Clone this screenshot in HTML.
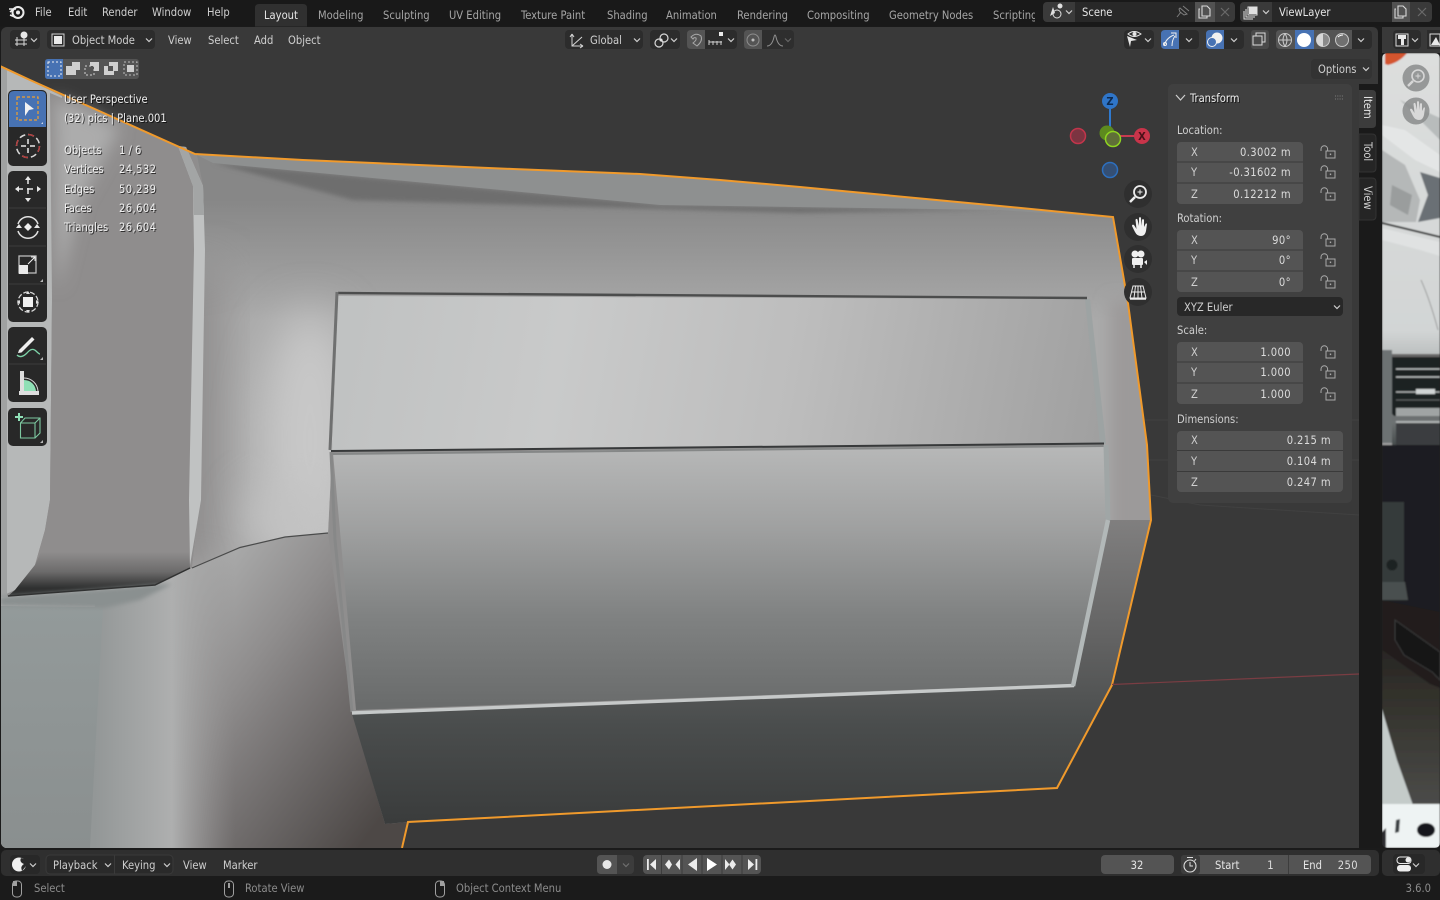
<!DOCTYPE html>
<html><head><meta charset="utf-8"><title>Blender</title>
<style>
html,body{margin:0;padding:0;background:#1b1b1b;width:1440px;height:900px;overflow:hidden}
svg{display:block;position:absolute;left:0;top:0}
text{font-family:"DejaVu Sans Condensed","DejaVu Sans","Liberation Sans",sans-serif;font-stretch:condensed;font-size:11.1px;fill:#cfcfcf}
.d{fill:#a6a6a6}.w{fill:#e6e6e6}.s{fill:#8c8c8c}
.v{fill:#f0f0f0;filter:drop-shadow(1px 1px 0 rgba(0,0,0,.65))}
.n{letter-spacing:.4px}
.r{text-anchor:end;fill:#dcdcdc;letter-spacing:.4px}
.ic{fill:none;stroke:#d8d8d8;stroke-width:1.2}
</style></head><body>
<svg width="1440" height="900" viewBox="0 0 1440 900" xmlns="http://www.w3.org/2000/svg">
<defs>
<clipPath id="vp"><rect x="1" y="27" width="1378" height="821" rx="6"/></clipPath>
<clipPath id="frameclip"><polygon points="197,155 640,174 720,180 800,187 1000,206 1113,218 1128,303 1147,445 1151,520 1107,520 1104,444 1087,299 338,296 332,451 328,533 285,537 240,548 192,568 200,500 205,250 203,186"/></clipPath>
<clipPath id="imgclip"><rect x="1382" y="53" width="58" height="795" rx="5"/></clipPath>
<linearGradient id="gFrame" x1="0" y1="200" x2="0" y2="320" gradientUnits="userSpaceOnUse"><stop offset="0" stop-color="#878787"/><stop offset="1" stop-color="#aaaaaa"/></linearGradient>
<linearGradient id="gUp" x1="330" y1="300" x2="1100" y2="440" gradientUnits="userSpaceOnUse"><stop offset="0" stop-color="#bfc1c1"/><stop offset=".3" stop-color="#c9caca"/><stop offset=".6" stop-color="#bdbdbd"/><stop offset="1" stop-color="#a0a0a0"/></linearGradient>
<linearGradient id="gLow" x1="0" y1="450" x2="0" y2="705" gradientUnits="userSpaceOnUse"><stop offset="0" stop-color="#b6b7b7"/><stop offset=".3" stop-color="#a0a1a1"/><stop offset=".65" stop-color="#808282"/><stop offset="1" stop-color="#6a6c6c"/></linearGradient>
<linearGradient id="gApron" x1="0" y1="520" x2="0" y2="822" gradientUnits="userSpaceOnUse"><stop offset="0" stop-color="#807f7f"/><stop offset=".4" stop-color="#626262"/><stop offset=".68" stop-color="#4a4d4d"/><stop offset="1" stop-color="#3a3c3c"/></linearGradient>
<linearGradient id="gBL" x1="170" y1="600" x2="410" y2="780" gradientUnits="userSpaceOnUse"><stop offset="0" stop-color="#afb0b0"/><stop offset=".35" stop-color="#8f8d8d"/><stop offset=".5" stop-color="#7f7c7c"/><stop offset=".83" stop-color="#5e5a59"/><stop offset="1" stop-color="#4d4846"/></linearGradient>
<linearGradient id="gBLh" x1="95" y1="0" x2="235" y2="0" gradientUnits="userSpaceOnUse"><stop offset="0" stop-color="#939797"/><stop offset=".55" stop-color="#aeafaf"/><stop offset="1" stop-color="#8f8d8d" stop-opacity="0"/></linearGradient>
<linearGradient id="gBLp" x1="0" y1="606" x2="0" y2="848" gradientUnits="userSpaceOnUse"><stop offset="0" stop-color="#939a9a"/><stop offset="1" stop-color="#8a8f8f"/></linearGradient>
<linearGradient id="gLB" x1="0" y1="552" x2="0" y2="588" gradientUnits="userSpaceOnUse"><stop offset="0" stop-color="#8f8d8d"/><stop offset=".55" stop-color="#6c6b6b"/><stop offset="1" stop-color="#2f3030"/></linearGradient>
<linearGradient id="gImg" x1="0" y1="53" x2="0" y2="450" gradientUnits="userSpaceOnUse"><stop offset="0" stop-color="#dcdedd"/><stop offset=".7" stop-color="#d2d5d5"/><stop offset=".88" stop-color="#8f9494"/><stop offset="1" stop-color="#3e4344"/></linearGradient>
<linearGradient id="gGround" x1="0" y1="640" x2="0" y2="805" gradientUnits="userSpaceOnUse"><stop offset="0" stop-color="#262422"/><stop offset=".45" stop-color="#36352f"/><stop offset="1" stop-color="#4b4b49"/></linearGradient>
<filter id="b2"><feGaussianBlur stdDeviation="2"/></filter>
<filter id="b1"><feGaussianBlur stdDeviation=".7"/></filter>
<filter id="b8" x="-50%" y="-50%" width="200%" height="200%"><feGaussianBlur stdDeviation="8"/></filter>
<filter id="b20" x="-50%" y="-50%" width="200%" height="200%"><feGaussianBlur stdDeviation="22"/></filter>
<g id="ch"><path d="M-3,-1.5 L0,1.5 L3,-1.5" fill="none" stroke="#cfcfcf" stroke-width="1.2"/></g>
<g id="lk"><rect x="-2" y="-1" width="9" height="7" fill="none" stroke="#a8a8a8" stroke-width="1"/><rect x="1.8" y="1.5" width="1.4" height="1.6" fill="#a8a8a8"/><path d="M-7,-1 V-3 a3.3,3.3 0 0 1 6.6,0 V-1" fill="none" stroke="#a8a8a8" stroke-width="1"/></g>
<g id="mouse"><rect x="-4.5" y="-8" width="9" height="16" rx="3.6" fill="none" stroke="#a0a0a0" stroke-width="1"/></g>
<g id="copy"><path d="M-5,-3 h-1 v9 h8 v-2 M-3,-6 h5 l3,3 v7 h-8 z" fill="none" stroke="#dadada" stroke-width="1.1"/></g>
<g id="xx"><path d="M-4,-4 L4,4 M4,-4 L-4,4" stroke="#6a6a6a" stroke-width="1.2"/></g>
</defs>

<rect width="1440" height="900" fill="#1b1b1b"/>

<!-- viewport -->
<g clip-path="url(#vp)">
<rect x="0" y="27" width="1380" height="821" fill="#393939"/>
<path d="M1151,495 L1200,505 L1359,515 M1147,460 H1359 M1145,420 H1359" stroke="#414141" stroke-width="1" fill="none"/>

<polygon points="0,66 30,80 195,154 303,160 513,169 640,174 720,180 800,187 1000,206 1113,217 1128,303 1147,445 1151,520 1112,685 1057,788 408,822 402,848 0,848" fill="#8f8e8e"/>
<!-- left edge -->
<polygon points="0,66 62,96 52,300 50,500 45,530 35,565 15,590 0,597" fill="#b6b8b8"/>
<rect x="0" y="68" width="7" height="530" fill="#a0a2a2"/>
<polygon points="50,93 197,155 200,500 190,568 155,585 8,596 15,590 35,565 45,530 50,500 52,300" fill="#8f8d8d"/>
<polygon points="55,98 120,128 80,200 58,290" fill="#acacac" filter="url(#b8)"/>
<polygon points="8,596 15,590 35,565 41,552 189,552 190,568 155,585" fill="url(#gLB)"/>
<!-- bottom left -->
<polygon points="0,597 155,585 192,568 240,548 285,537 328,533 352,712 385,824 408,822 402,848 0,848" fill="url(#gBL)"/>
<polygon points="95,600 155,585 192,568 235,550 235,848 88,848" fill="url(#gBLh)"/>
<polygon points="0,606 103,607 90,848 0,848" fill="url(#gBLp)"/>
<polygon points="0,597 155,585 172,584 140,600 104,608 0,606" fill="#8a9090" filter="url(#b2)"/>
<path d="M8,596 L155,585 L190,568" fill="none" stroke="#303131" stroke-width="1.500"/>
<!-- frame -->
<polygon points="197,155 640,174 720,180 800,187 1000,206 1113,218 1128,303 1147,445 1151,520 1107,520 1104,444 1087,299 338,296 332,451 328,533 285,537 240,548 192,568 200,500 205,250 203,186" fill="url(#gFrame)"/>
<g clip-path="url(#frameclip)">
<rect x="160" y="270" width="60" height="300" fill="#8d8b8b" filter="url(#b20)"/>
<ellipse cx="310" cy="440" rx="50" ry="130" fill="#c8c8c8" filter="url(#b20)"/>
<ellipse cx="290" cy="520" rx="45" ry="35" fill="#c2c2c2" filter="url(#b20)"/>
<rect x="1110" y="300" width="60" height="240" fill="#9c9a9a" filter="url(#b8)"/>
<polygon points="213,163 660,205 1000,210 800,213 353,200" fill="#6e6e6e" filter="url(#b2)"/>
<polygon points="197,155 303,160 513,169 640,174 720,180 800,187 1000,206 1113,218 1000,210 660,205 213,163" fill="#8e9090"/>
</g>
<path d="M192,568 L240,547.500 L285,537 L328,533" fill="none" stroke="#4a4b4b" stroke-width="1.200"/>
<!-- stripe -->
<polygon points="178,146 186,147 203,186 205,250 201,500 190,565 189,500 194,250 193,186" fill="#c0c2c2"/>
<polygon points="178,146 186,147 203,186 204,215 194,215 193,186" fill="#a3a5a5"/>
<!-- upper panel -->
<polygon points="338,296 1087,299 1103,444 332,451" fill="url(#gUp)"/>
<polygon points="1085,299 1090,299 1106,444 1100,444" fill="#9da3a3"/>
<path d="M338,293 L1087,298" stroke="#4c4d4d" stroke-width="2.4"/>
<path d="M337,292 L330,450" stroke="#6f7070" stroke-width="3"/>
<!-- lower panel -->
<polygon points="333,453 1105,445 1106,520 1072,684 356,710" fill="url(#gLow)"/>
<path d="M331,451 L1104,443.500" stroke="#37393a" stroke-width="2"/>
<path d="M332,454 L1104,446" stroke="#858787" stroke-width="2"/>
<path d="M331,452 L335,540 L352,712" stroke="#878888" stroke-width="3" fill="none"/>
<path d="M1106,445 L1108,520" stroke="#a0a6a6" stroke-width="5"/>
<!-- apron -->
<polygon points="352,714 1074,687 1110,520 1151,520 1112,685 1057,788 408,822 385,824" fill="url(#gApron)"/>
<polygon points="408,822 402,848 440,848 440,820" fill="#393939"/>
<path d="M352,713 L1074,685.500" stroke="#c6c9c9" stroke-width="3.400"/>
<path d="M1108,520 L1073,686" stroke="#b2b8b8" stroke-width="4.500"/>
<!-- outline -->
<path d="M0,66 L30,80 L195,154 L303,160 L513,169 L640,174 L720,180 L800,187 L1000,206 L1113,217 L1128,303 L1147,445 L1151,520 L1112,685 L1057,788 L408,822 L402,848" fill="none" stroke="#f09a2c" stroke-width="2"/>
<path d="M1112,684.500 L1359,674" stroke="#7a3d43" stroke-width="1.2" fill="none"/>
</g>

<!-- sidebar tab strip -->
<rect x="1359" y="27" width="21" height="821" fill="#1a1a1a"/>
<path d="M1359,27 H1372 Q1378,27 1378,33 V84 H1359 Z" fill="#393939"/>

<!-- topbar -->
<rect x="0" y="0" width="1440" height="26.500" fill="#191919"/>
<g transform="translate(17,12)"><circle cx="1" cy="0.500" r="5.500" fill="none" stroke="#ececec" stroke-width="2"/><circle cx="1" cy="0.500" r="2" fill="#ececec"/><path d="M-7,0 L-2,-4 M-7,3 L-2,5 M-8,-3 H-1" stroke="#ececec" stroke-width="1.600"/></g>
<text x="35" y="16">File</text><text x="68" y="16">Edit</text><text x="102" y="16">Render</text><text x="152" y="16">Window</text><text x="207" y="16">Help</text>
<path d="M255,26.500 V8 Q255,4 259,4 H303 Q307,4 307,8 V26.500 Z" fill="#303030"/>
<text x="264" y="19" class="w">Layout</text>
<text x="318" y="19" class="d">Modeling</text><text x="383" y="19" class="d">Sculpting</text><text x="449" y="19" class="d">UV Editing</text><text x="521" y="19" class="d">Texture Paint</text><text x="607" y="19" class="d">Shading</text><text x="666" y="19" class="d">Animation</text><text x="737" y="19" class="d">Rendering</text><text x="807" y="19" class="d">Compositing</text><text x="889" y="19" class="d">Geometry Nodes</text>
<svg x="993" y="0" width="42" height="26"><text x="0" y="19" class="d">Scripting</text></svg>

<!-- scene -->
<rect x="1043" y="2" width="192" height="20" rx="4" fill="#3a3a3a"/>
<rect x="1075" y="2" width="120" height="20" fill="#282828"/>
<rect x="1195" y="2" width="20" height="20" fill="#525252"/>
<circle cx="1057" cy="14" r="4" fill="none" stroke="#e0e0e0"/><path d="M1050,16 L1053,7 L1055,13 Z" fill="#e0e0e0"/><circle cx="1060" cy="6" r="2.500" fill="#e0e0e0"/>
<use href="#ch" x="1069" y="12"/>
<text x="1082" y="16" class="w">Scene</text>
<path d="M1177,17 L1181,12 M1180,8 L1187,14 L1184,15 L1180,12 L1179,9 Z M1183,6 L1189,11" stroke="#7e7e7e" fill="none"/>
<use href="#copy" x="1205" y="12"/><use href="#xx" x="1225" y="12"/>
<rect x="1240" y="2" width="192" height="20" rx="4" fill="#3a3a3a"/>
<rect x="1272" y="2" width="120" height="20" fill="#282828"/>
<rect x="1392" y="2" width="18" height="20" fill="#525252"/>
<path d="M1248,7 h9 v8 h-9 z M1246,9 v8 h9 M1244,11 v8 h9" fill="none" stroke="#e0e0e0"/><rect x="1249" y="7" width="8" height="7" fill="#e0e0e0"/>
<use href="#ch" x="1266" y="12"/>
<text x="1279" y="16" class="w">ViewLayer</text>
<use href="#copy" x="1401" y="12"/><use href="#xx" x="1422" y="12"/>

<!-- viewport header -->
<g>
<rect x="10" y="30" width="30" height="19" rx="4" fill="#2c2c2c"/>
<path d="M15,40 H27 M17,37 V46 M24,37 V46 M15,44 H27" stroke="#d8d8d8" fill="none"/><circle cx="24" cy="35" r="3.500" fill="#e6e6e6"/><use href="#ch" x="34" y="40"/>
<rect x="47" y="30" width="108" height="19" rx="4" fill="#2c2c2c"/>
<rect x="52" y="34" width="12" height="12" fill="none" stroke="#d0d0d0"/><rect x="54" y="36" width="8" height="8" fill="#eaeaea"/>
<text x="72" y="44">Object Mode</text><use href="#ch" x="149" y="40"/>
<text x="168" y="44">View</text><text x="208" y="44">Select</text><text x="254" y="44">Add</text><text x="288" y="44">Object</text>

<rect x="565" y="30" width="78" height="19" rx="4" fill="#2c2c2c"/>
<path d="M572,34 V46 H583 M572,46 L582,37 M572,34 l-2,3 M572,34 l2,3 M583,46 l-3,-2 M583,46 l-3,2" stroke="#d4d4d4" fill="none"/>
<text x="590" y="44">Global</text><use href="#ch" x="637" y="40"/>
<rect x="650" y="30" width="30" height="19" rx="4" fill="#2c2c2c"/>
<circle cx="659" cy="43" r="4" class="ic"/><circle cx="664" cy="38" r="4" class="ic"/><circle cx="661" cy="40" r="1.500" fill="#e0e0e0"/><use href="#ch" x="674" y="40"/>
<rect x="687" y="30" width="50" height="19" rx="4" fill="#2c2c2c"/>
<path d="M687,34 q0,-4 4,-4 H705 V49 H691 q-4,0 -4,-4 Z" fill="#545454"/>
<path d="M691,37 Q696,32 701,36 Q703,41 697,46 L693,43 Q697,40 696,38 Q694,37 693,39 Z" fill="none" stroke="#a8a8a8"/>
<path d="M709,42 H722 M709,40 V45 M713,41 V45 M717,41 V45 M721,41 V45" stroke="#d0d0d0" fill="none"/><rect x="719" y="32" width="4" height="4" fill="#eaeaea"/><use href="#ch" x="731" y="40"/>
<rect x="744" y="30" width="50" height="19" rx="4" fill="#2e2e2e"/>
<path d="M744,34 q0,-4 4,-4 H762 V49 H748 q-4,0 -4,-4 Z" fill="#545454"/>
<circle cx="753" cy="40" r="6" fill="none" stroke="#8e8e8e"/><circle cx="753" cy="40" r="1.500" fill="#bdbdbd"/>
<path d="M767,46 Q772,46 774,37 Q775,33 776,37 Q778,46 783,46" fill="none" stroke="#909090"/><use href="#ch" x="788" y="40" opacity=".35"/>

<!-- right header -->
<rect x="1124" y="30" width="30" height="19" rx="4" fill="#2c2c2c"/>
<path d="M1127,36 L1137,40 L1131,41 L1130,47 Z" fill="#e6e6e6"/><path d="M1128,34 Q1134,29 1141,34 Q1134,39 1128,34 Z" fill="#2c2c2c" stroke="#e6e6e6"/><circle cx="1134.500" cy="34" r="2" fill="#e6e6e6"/><use href="#ch" x="1148" y="40"/>
<rect x="1161" y="30" width="38" height="19" rx="4" fill="#2c2c2c"/>
<path d="M1161,34 q0,-4 4,-4 H1179 V49 H1165 q-4,0 -4,-4 Z" fill="#4772b3"/>
<path d="M1164,46 Q1166,38 1174,35 M1172,46 Q1172,40 1175,36 M1171,33 L1176,33 L1176,38" fill="none" stroke="#f0f0f0"/><circle cx="1165" cy="44" r="1.500" fill="none" stroke="#f0f0f0"/><use href="#ch" x="1189" y="40"/>
<rect x="1206" y="30" width="38" height="19" rx="4" fill="#2c2c2c"/>
<path d="M1206,34 q0,-4 4,-4 H1224 V49 H1210 q-4,0 -4,-4 Z" fill="#4772b3"/>
<circle cx="1217" cy="38" r="5.500" fill="#f0f0f0"/><circle cx="1212" cy="42" r="4.500" fill="#4772b3" stroke="#f0f0f0"/><use href="#ch" x="1234" y="40"/>
<rect x="1251" y="30" width="18" height="19" rx="3" fill="#4a4a4a"/>
<rect x="1256" y="33" width="9" height="9" fill="none" stroke="#dadada"/><rect x="1253" y="36" width="9" height="9" fill="#4a4a4a" stroke="#dadada"/>
<rect x="1276" y="30" width="96" height="19" rx="4" fill="#2c2c2c"/>
<path d="M1276,34 q0,-4 4,-4 H1352 V49 H1280 q-4,0 -4,-4 Z" fill="#545454"/>
<rect x="1295" y="30" width="19" height="19" fill="#4772b3"/>
<circle cx="1285" cy="40" r="6.500" fill="none" stroke="#c8c8c8"/><path d="M1278.500,40 H1291.500 M1285,33.500 Q1281,40 1285,46.500 M1285,33.500 Q1289,40 1285,46.500" stroke="#c8c8c8" fill="none"/>
<circle cx="1304" cy="40" r="7" fill="#fff"/>
<circle cx="1323" cy="40" r="6.500" fill="#8a8a8a" stroke="#c8c8c8"/><path d="M1323,33.500 A6.500,6.500 0 0 0 1323,46.500 Z" fill="#d8d8d8"/>
<circle cx="1342" cy="40" r="6.500" fill="#707070" stroke="#c8c8c8"/><path d="M1338,37 Q1340,35 1343,35" stroke="#fff" fill="none"/>
<use href="#ch" x="1361" y="40"/>
<rect x="1311" y="59" width="61" height="20" rx="4" fill="#333"/>
<text x="1318" y="73">Options</text><use href="#ch" x="1366" y="69"/>

<!-- select mode row -->
<rect x="45" y="59" width="94" height="20" rx="3" fill="#545454"/>
<path d="M45,62 q0,-3 3,-3 H63 V79 H48 q-3,0 -3,-3 Z" fill="#4772b3"/>
<rect x="48" y="62" width="13" height="14" fill="none" stroke="#f0f0f0" stroke-dasharray="2 2"/>
<path d="M72,62 h8 v8 h-4 v5 h-10 v-9 h6 z" fill="#cfcfcf"/>
<rect x="85" y="66" width="9" height="9" fill="none" stroke="#cfcfcf" stroke-dasharray="2 2"/><path d="M90,62 h9 v9 h-5 v-5 h-4 z" fill="#cfcfcf"/>
<path d="M109,62 h9 v9 h-4 v4 h-10 v-9 h5 z M108,66 v5 h5 v-5 z" fill="#cfcfcf" fill-rule="evenodd"/>
<rect x="124" y="62" width="13" height="13" fill="none" stroke="#bdbdbd" stroke-dasharray="2 2"/><rect x="127" y="65" width="7" height="7" fill="#cfcfcf"/>
</g>

<!-- toolbar -->
<g>
<rect x="8" y="90" width="39" height="76" rx="5" fill="#282828"/>
<path d="M9,96 q0,-5 5,-5 H41 q5,0 5,5 V127 H9 Z" fill="#4772b3"/>
<rect x="17" y="97" width="21" height="23" fill="none" stroke="#f0a030" stroke-width="1.200" stroke-dasharray="3 2"/>
<path d="M25,102 L34,109 L29,110 L25,116 Z" fill="#f2f2f2"/>
<path d="M43,122 V124 H41 Z" fill="#cfd8e8"/>
<circle cx="28" cy="146" r="11.500" fill="none" stroke="#d8d8d8" stroke-width="1.500" stroke-dasharray="6 3"/><circle cx="28" cy="146" r="11.500" fill="none" stroke="#b03a3a" stroke-width="1.500" stroke-dasharray="6 12"/>
<path d="M28,139 V144 M28,148 V153 M21,146 H26 M30,146 H35" stroke="#e8e8e8" stroke-width="1.500"/>

<rect x="8" y="171" width="39" height="151" rx="5" fill="#282828"/>
<path d="M9,208 H46 M9,246 H46 M9,284 H46" stroke="#3b3b3b"/>
<path d="M28,178 V200 M17,189 H39" stroke="#e8e8e8" stroke-width="1.500" stroke-dasharray="6 4"/>
<path d="M28,176 l-3,4 h6 z M28,202 l-3,-4 h6 z M15,189 l4,-3 v6 z M41,189 l-4,-3 v6 z" fill="#e8e8e8"/>
<path d="M18,224 A10.500,10.500 0 0 1 38,224 M18,231 A10.500,10.500 0 0 0 38,231" fill="none" stroke="#e0e0e0" stroke-width="1.500"/>
<path d="M28,223 l4,4 -4,4 -4,-4 z" fill="#f0f0f0"/><path d="M16,228 l3,-4 3,4 z M34,228 l3,-4 3,4 z" fill="#e8e8e8"/>
<rect x="19" y="256" width="17" height="17" fill="none" stroke="#bdbdbd" stroke-width="1.300"/>
<rect x="19" y="265" width="9" height="9" fill="#eaeaea"/><path d="M28,264 L35,257 M31,257 H35 V261" stroke="#f0f0f0" fill="none"/>
<path d="M43,279 V282 H40 Z" fill="#b8b8b8"/>
<circle cx="28" cy="302" r="10" fill="none" stroke="#d8d8d8" stroke-width="1.300" stroke-dasharray="5 2"/><rect x="23" y="297" width="10" height="10" fill="#f0f0f0"/>
<path d="M28,291 l-2,3 h4 z M28,313 l-2,-3 h4 z M17,302 l3,-2 v4 z M39,302 l-3,-2 v4 z" fill="#e0e0e0"/>

<rect x="8" y="327" width="39" height="75" rx="5" fill="#282828"/>
<path d="M9,364 H46" stroke="#3b3b3b"/>
<path d="M19,350 L32,337 L34.500,339.500 L21.500,352.500 L18,353 Z" fill="#efefef"/>
<path d="M17,355 Q21,359 27,353 Q32,347 36,351 Q39,354 40,354" fill="none" stroke="#7dd3a8" stroke-width="1.300"/>
<path d="M43,357 V360 H40 Z" fill="#b8b8b8"/>
<path d="M20,371 H24 V391 H20 Z M19,391 H39 V395 H19 Z" fill="#dedede"/>
<path d="M24,380 A12,12 0 0 1 36,391 H24 Z" fill="#8fe0b6"/><path d="M24,378 A14,14 0 0 1 38,391" fill="none" stroke="#d8d8d8"/>

<rect x="8" y="408" width="39" height="38" rx="5" fill="#282828"/>
<path d="M20.500,423 H35 V438 H20.500 Z M20.500,423 L25,418 H40 V433 L35,438 M35,423 L40,418" fill="none" stroke="#7dc8a0" stroke-width="1.100"/>
<path d="M15,417 H23 M19,413 V421" stroke="#8fe0b6" stroke-width="2"/>
<path d="M43,440 V443 H40 Z" fill="#b8b8b8"/>
</g>

<!-- stats -->
<text x="64" y="103" class="v">User Perspective</text>
<text x="64" y="122" class="v">(32) pics | Plane.001</text>
<text x="64" y="154" class="v">Objects</text><text x="119" y="154" class="v">1 / 6</text>
<text x="64" y="173" class="v">Vertices</text><text x="119" y="173" class="v n">24,532</text>
<text x="64" y="193" class="v">Edges</text><text x="119" y="193" class="v n">50,239</text>
<text x="64" y="212" class="v">Faces</text><text x="119" y="212" class="v n">26,604</text>
<text x="64" y="231" class="v">Triangles</text><text x="119" y="231" class="v n">26,604</text>

<!-- gizmo -->
<path d="M1110,109 V136" stroke="#2f7ad0" stroke-width="2"/>
<path d="M1113,136 H1135" stroke="#c83a50" stroke-width="2"/>
<circle cx="1078" cy="136" r="7.500" fill="#7c3441" stroke="#c2354b" stroke-width="1.500"/>
<circle cx="1110" cy="170" r="7.500" fill="#344f74" stroke="#2d6fbe" stroke-width="1.500"/>
<circle cx="1107" cy="133" r="7.500" fill="#5d8a1e"/>
<circle cx="1113" cy="139" r="7.500" fill="#5f6f38" stroke="#8fd420" stroke-width="1.500"/>
<circle cx="1142" cy="136" r="8" fill="#c8344a"/>
<circle cx="1110" cy="101" r="8" fill="#2f75c8"/>
<text x="1142" y="140" text-anchor="middle" style="font-weight:bold;fill:#4a1018;font-size:11px">X</text>
<text x="1110" y="105" text-anchor="middle" style="font-weight:bold;fill:#0d2a50;font-size:11px">Z</text>

<!-- nav buttons -->
<circle cx="1138" cy="194" r="14" fill="#2f2f2f"/>
<circle cx="1140" cy="192" r="6" fill="none" stroke="#ececec" stroke-width="1.800"/><path d="M1137.500,192 h5 M1140,189.500 v5" stroke="#ececec"/><path d="M1135,197 L1130,202" stroke="#ececec" stroke-width="2.500"/>
<circle cx="1138" cy="227" r="14" fill="#2f2f2f"/>
<path d="M1132,226 L1135,232 Q1137,236 1141,236 Q1145,236 1146,231 L1147,224 Q1146,222 1145,225 L1144,227 L1144,220 Q1143,218 1142,220 L1141.500,226 L1141,218 Q1140,216 1139,218 L1139,226 L1137.500,219.500 Q1136,218 1135.500,220 L1136.500,229 L1134,225 Q1132,224 1132,226 Z" fill="#f0f0f0"/>
<circle cx="1138" cy="259" r="14" fill="#2f2f2f"/>
<circle cx="1135" cy="254" r="3.500" fill="#f0f0f0"/><circle cx="1141" cy="254" r="3.500" fill="#f0f0f0"/><rect x="1132" y="258" width="11" height="7" rx="1" fill="#f0f0f0"/><path d="M1144,262 l3,-2 v5 z" fill="#f0f0f0"/><path d="M1134,265 v3 M1141,265 v3" stroke="#f0f0f0" stroke-width="1.500"/>
<circle cx="1138" cy="292" r="14" fill="#2f2f2f"/>
<path d="M1133,286 H1143 L1146,298 H1130 Z M1138,286 V298 M1131.500,292 H1144.500 M1135.500,286 L1134,298 M1140.500,286 L1142,298" fill="none" stroke="#ececec"/><path d="M1130,299 H1146" stroke="#ececec" stroke-width="1.500"/>

<!-- tabs -->
<path d="M1359,90 H1372 Q1376,90 1376,94 V124 Q1376,128 1372,128 H1359 Z" fill="#3c3c3c"/>
<path d="M1359,134 H1372 Q1376,134 1376,138 V168 Q1376,172 1372,172 H1359 Z" fill="#252525" stroke="#333"/>
<path d="M1359,178 H1372 Q1376,178 1376,182 V216 Q1376,220 1372,220 H1359 Z" fill="#252525" stroke="#333"/>
<text transform="translate(1364,96) rotate(90)" class="w">Item</text>
<text transform="translate(1364,142) rotate(90)">Tool</text>
<text transform="translate(1364,186) rotate(90)">View</text>

<!-- N panel -->
<rect x="1168" y="84" width="184" height="419" rx="5" fill="#404040"/>
<path d="M1176,95 L1180.500,100 L1185,95" fill="none" stroke="#cfcfcf" stroke-width="1.200"/>
<text x="1190" y="102" class="v">Transform</text>
<path d="M1335,96 h9 M1335,99 h9" stroke="#7c7c7c" stroke-dasharray="1 1.300"/>

<text x="1177" y="134" >Location:</text>
<rect x="1177" y="142" width="126" height="62" rx="4" fill="#545454"/><path d="M1177,162 H1303 M1177,183 H1303" stroke="#3a3a3a"/>
<text x="1191" y="156">X</text><text x="1291" y="156" class="r">0.3002 m</text>
<text x="1191" y="176">Y</text><text x="1291" y="176" class="r">-0.31602 m</text>
<text x="1191" y="198">Z</text><text x="1291" y="198" class="r">0.12212 m</text>
<use href="#lk" x="1328" y="152"/><use href="#lk" x="1328" y="172"/><use href="#lk" x="1328" y="194"/>

<text x="1177" y="222">Rotation:</text>
<rect x="1177" y="230" width="126" height="62" rx="4" fill="#545454"/><path d="M1177,250 H1303 M1177,271 H1303" stroke="#3a3a3a"/>
<text x="1191" y="244">X</text><text x="1291" y="244" class="r">90°</text>
<text x="1191" y="264">Y</text><text x="1291" y="264" class="r">0°</text>
<text x="1191" y="286">Z</text><text x="1291" y="286" class="r">0°</text>
<use href="#lk" x="1328" y="240"/><use href="#lk" x="1328" y="260"/><use href="#lk" x="1328" y="282"/>

<rect x="1177" y="297" width="166" height="19" rx="4" fill="#282828"/>
<text x="1184" y="311">XYZ Euler</text><use href="#ch" x="1337" y="307"/>

<text x="1177" y="334">Scale:</text>
<rect x="1177" y="342" width="126" height="62" rx="4" fill="#545454"/><path d="M1177,362 H1303 M1177,383 H1303" stroke="#3a3a3a"/>
<text x="1191" y="356">X</text><text x="1291" y="356" class="r">1.000</text>
<text x="1191" y="376">Y</text><text x="1291" y="376" class="r">1.000</text>
<text x="1191" y="398">Z</text><text x="1291" y="398" class="r">1.000</text>
<use href="#lk" x="1328" y="352"/><use href="#lk" x="1328" y="372"/><use href="#lk" x="1328" y="394"/>

<text x="1177" y="423">Dimensions:</text>
<rect x="1177" y="431" width="166" height="61" rx="4" fill="#545454"/><path d="M1177,450.500 H1343 M1177,471.500 H1343" stroke="#3a3a3a"/>
<text x="1191" y="444">X</text><text x="1331" y="444" class="r">0.215 m</text>
<text x="1191" y="465">Y</text><text x="1331" y="465" class="r">0.104 m</text>
<text x="1191" y="486">Z</text><text x="1331" y="486" class="r">0.247 m</text>

<!-- image editor -->
<path d="M1382,27 H1440 V53 H1382 Z" fill="#393939"/>
<rect x="1393" y="30" width="28" height="19" rx="4" fill="#2c2c2c"/>
<path d="M1396,34 h12 v12 h-12 z" fill="none" stroke="#dcdcdc"/><path d="M1398,35 h8 v4 h-2 v6 h-3 v-6 h-3 z" fill="#eaeaea"/><use href="#ch" x="1415" y="40"/>
<rect x="1427" y="30" width="13" height="19" fill="#2c2c2c"/><path d="M1430,34 h10 v12 h-10 z" fill="none" stroke="#dcdcdc"/><path d="M1431,45 l5,-8 4,8 z" fill="#eaeaea"/>

<g clip-path="url(#imgclip)">
<g filter="url(#b1)">
<rect x="1382" y="53" width="58" height="400" fill="url(#gImg)"/>
<path d="M1385,53 H1407 Q1400,62 1388,65 L1385,64 Z" fill="#d4552f"/>
<path d="M1400,100 L1440,118 V140 L1425,125 Z" fill="#b8bcbc"/>
<path d="M1382,125 L1405,130 L1440,155 V172 L1415,160 L1382,135 Z" fill="#e4e6e6"/>
<path d="M1420,172 L1440,178 V218 L1418,222 L1428,195 Z" fill="#6a7074"/>
<path d="M1382,150 L1405,165 L1420,200 L1416,222 L1382,222 Z" fill="#b5b8b8"/>
<path d="M1392,185 L1412,195 L1408,215 L1390,205 Z" fill="#9a9d9d"/>
<path d="M1382,224 L1440,238 V236 L1382,222 Z" fill="#2a2b2b"/>
<path d="M1382,228 L1440,242 V256 L1420,250 L1382,240 Z" fill="#e0e2e2"/>
<path d="M1421,280 Q1430,300 1438,330" fill="none" stroke="#8a8a8a" stroke-width=".8"/>
<rect x="1382" y="350" width="10" height="95" fill="#6d7273"/>
<rect x="1392" y="354" width="48" height="62" rx="3" fill="#1f2224"/>
<rect x="1392" y="354" width="48" height="3" fill="#666"/>
<path d="M1396,369 H1440 M1396,377 H1440" stroke="#c8cccc" stroke-width="1.300"/>
<path d="M1396,392 H1440" stroke="#b8bcbc" stroke-width="1.300"/><rect x="1416" y="389" width="19" height="5" fill="#d0d4d4"/>
<path d="M1396,400 H1440" stroke="#606466"/>
<rect x="1396" y="408" width="44" height="8" fill="#a0a4a4"/>
<rect x="1392" y="416" width="48" height="5" fill="#6c7071"/>
<rect x="1396" y="421" width="44" height="30" fill="#3b3e40"/>
<rect x="1396" y="421" width="44" height="2" fill="#b0b4b4"/>
<rect x="1382" y="443" width="10" height="2" fill="#a0a0a0"/>
<rect x="1382" y="445" width="58" height="260" fill="#1f1f21"/>
<rect x="1382" y="502" width="22" height="80" fill="#343a3a"/>
<path d="M1382,582 H1405 L1408,600 H1382 Z" fill="#4a4f4f"/>
<circle cx="1392" cy="565" r="5.500" fill="#1f2222"/>
<path d="M1382,600 L1440,612 V700 L1382,660 Z" fill="#201d1d"/>
<path d="M1395,620 L1440,652 V680 L1432,672 L1404,655 L1395,640 Z" fill="#171719" stroke="#3a3a3a"/>
<path d="M1382,650 L1430,684 L1440,688 V804 L1413,805 L1397,760 L1382,709 Z" fill="url(#gGround)"/>
<path d="M1382,709 L1397,760 L1413,805 H1382 Z" fill="#c4cbc9"/>
<path d="M1382,804 H1440 V848 H1382 Z" fill="#eef3f3"/>
<ellipse cx="1426" cy="830" rx="9" ry="7" fill="#17181a"/>
<path d="M1396,820 L1400,819 L1399,832 L1395,833 Z" fill="#3a3f42"/>
<path d="M1382,832 L1386,828 V848 H1382 Z" fill="#2a2c2e"/>
</g>
</g>
<circle cx="1416" cy="78" r="13.500" fill="#8a8c8c" opacity=".85"/>
<circle cx="1418" cy="76" r="6" fill="none" stroke="#d6d6d6" stroke-width="1.600"/><path d="M1415.500,76 h5 M1418,73.500 v5" stroke="#d6d6d6"/><path d="M1413,81 L1408,86" stroke="#d6d6d6" stroke-width="2.400"/>
<circle cx="1416" cy="111" r="13.500" fill="#8a8c8c" opacity=".85"/>
<path d="M1410,110 L1413,116 Q1415,120 1419,120 Q1423,120 1424,115 L1425,108 Q1424,106 1423,109 L1422,111 L1422,104 Q1421,102 1420,104 L1419.500,110 L1419,102 Q1418,100 1417,102 L1417,110 L1415.500,103.500 Q1414,102 1413.500,104 L1414.500,113 L1412,109 Q1410,108 1410,110 Z" fill="#d8d8d8"/>

<!-- timeline -->
<rect x="0" y="848" width="1440" height="52" fill="#1b1b1b"/>
<rect x="1" y="850" width="1378" height="26" rx="5" fill="#2f2f2f"/>
<rect x="1382" y="850" width="58" height="26" rx="5" fill="#2f2f2f"/>
<rect x="10" y="855" width="30" height="19" rx="4" fill="#282828"/>
<circle cx="19" cy="864.500" r="7" fill="#efefef"/><path d="M21,858 Q19,862 24,864 Q20,866 22,871 L26,866 V860 Z" fill="#282828"/><use href="#ch" x="33" y="865"/>
<rect x="46" y="855" width="127" height="19" rx="4" fill="#2a2a2a" stroke="#3a3a3a"/>
<path d="M114.500,855 V874" stroke="#3a3a3a"/>
<text x="53" y="869">Playback</text><use href="#ch" x="108" y="865"/>
<text x="122" y="869">Keying</text><use href="#ch" x="167" y="865"/>
<text x="183" y="869">View</text><text x="223" y="869">Marker</text>
<rect x="597" y="855" width="37" height="19" rx="4" fill="#3c3c3c"/>
<path d="M597,859 q0,-4 4,-4 H617 V874 H601 q-4,0 -4,-4 Z" fill="#545454"/>
<circle cx="607" cy="864.500" r="4.500" fill="#e6e6e6"/><use href="#ch" x="626" y="865" opacity=".35"/>
<rect x="643" y="855" width="118" height="19" rx="4" fill="#545454"/>
<path d="M661.500,855 V874 M682,855 V874 M702,855 V874 M722,855 V874 M742,855 V874" stroke="#3d3d3d"/>
<path d="M647,859 h1.800 v11 h-1.800 z M656,859 v11 l-6,-5.500 z" fill="#ececec"/>
<path d="M665,864.500 l4,-5 3,5 -3,5 z M680,859 l-4.500,5.500 4.500,5.500 z" fill="#ececec"/>
<path d="M697,858 v13 l-9,-6.500 z" fill="#ececec"/>
<path d="M707,858 v13 l10,-6.500 z" fill="#fff"/>
<path d="M725,859 l4.500,5.500 -4.500,5.500 z M736,864.500 l-3.500,-5 -3.500,5 3.500,5 z" fill="#ececec"/>
<path d="M748,859 l6,5.500 -6,5.500 z M755.500,859 h1.800 v11 h-1.800 z" fill="#ececec"/>
<rect x="1101" y="855" width="73" height="19" rx="4" fill="#545454"/>
<text x="1137" y="869" text-anchor="middle" class="w">32</text>
<rect x="1181" y="855" width="190" height="19" rx="4" fill="#545454"/>
<rect x="1181" y="855" width="19" height="19" rx="3" fill="#3d3d3d"/>
<circle cx="1190" cy="866" r="6" fill="none" stroke="#dedede" stroke-width="1.100"/><path d="M1190,862 V866 H1193 M1187,857.500 H1193 M1196,859 l-1.500,2" stroke="#dedede" fill="none"/>
<path d="M1288.500,855 V874" stroke="#3d3d3d"/>
<text x="1215" y="869" class="w">Start</text><text x="1274" y="869" class="r">1</text>
<text x="1303" y="869" class="w">End</text><text x="1358" y="869" class="r">250</text>
<rect x="1393" y="854" width="32" height="20" rx="4" fill="#282828"/>
<rect x="1397" y="857" width="14" height="6.500" rx="3" fill="#282828" stroke="#ededed"/><circle cx="1408" cy="860" r="2.500" fill="#ededed"/>
<rect x="1397" y="865" width="14" height="6.500" rx="3" fill="#ededed"/><use href="#ch" x="1416" y="865"/>

<!-- status -->
<use href="#mouse" x="17" y="889"/><path d="M17,881 H13 V886 H17 Z" fill="#a0a0a0"/>
<text x="34" y="892" class="s">Select</text>
<use href="#mouse" x="229" y="889"/><rect x="228" y="883" width="2" height="5" fill="#a0a0a0"/>
<text x="245" y="892" class="s">Rotate View</text>
<use href="#mouse" x="440" y="889"/><path d="M440,881 H444 V886 H440 Z" fill="#a0a0a0"/>
<text x="456" y="892" class="s">Object Context Menu</text>
<text x="1431" y="892" text-anchor="end" class="s">3.6.0</text>
</svg>
</body></html>
